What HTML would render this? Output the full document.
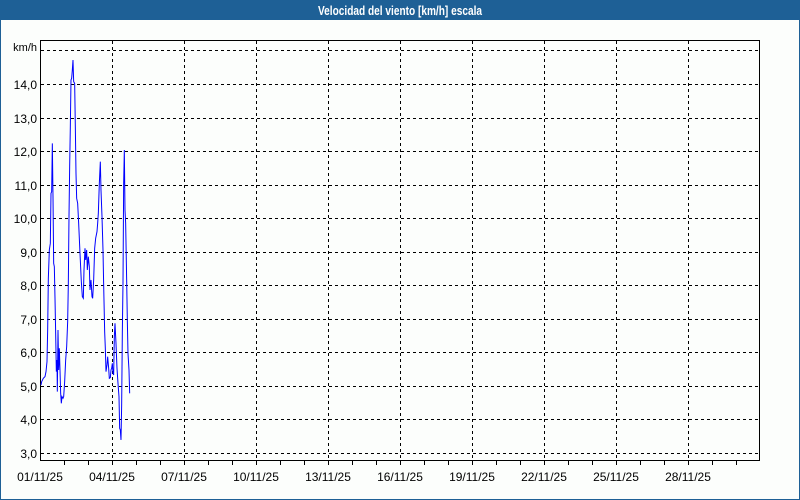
<!DOCTYPE html>
<html><head><meta charset="utf-8"><style>
html,body{margin:0;padding:0;background:#fcfefc;}
body{width:800px;height:500px;overflow:hidden;position:relative;font-family:"Liberation Sans",sans-serif;}
</style></head><body>
<svg width="800" height="500" xmlns="http://www.w3.org/2000/svg" style="position:absolute;left:0;top:0">
<rect x="0" y="0" width="800" height="500" fill="#fcfefc"/>
<rect x="0.5" y="0.5" width="799" height="499" fill="none" stroke="#1e6096"/>
<rect x="0" y="0" width="800" height="20" fill="#1e6096"/>
<text x="400" y="15" text-anchor="middle" fill="#fff" font-weight="bold" font-size="12.5" font-family="Liberation Sans, sans-serif" textLength="164" lengthAdjust="spacingAndGlyphs">Velocidad del viento [km/h] escala</text>
<g stroke="#000" stroke-width="1" stroke-dasharray="3,3" shape-rendering="crispEdges">
<line x1="41" y1="50.5" x2="760" y2="50.5"/>
<line x1="41" y1="84.5" x2="760" y2="84.5"/>
<line x1="41" y1="118.5" x2="760" y2="118.5"/>
<line x1="41" y1="151.5" x2="760" y2="151.5"/>
<line x1="41" y1="185.5" x2="760" y2="185.5"/>
<line x1="41" y1="218.5" x2="760" y2="218.5"/>
<line x1="41" y1="252.5" x2="760" y2="252.5"/>
<line x1="41" y1="285.5" x2="760" y2="285.5"/>
<line x1="41" y1="319.5" x2="760" y2="319.5"/>
<line x1="41" y1="352.5" x2="760" y2="352.5"/>
<line x1="41" y1="386.5" x2="760" y2="386.5"/>
<line x1="41" y1="419.5" x2="760" y2="419.5"/>
<line x1="41" y1="453.5" x2="760" y2="453.5"/>
<line x1="112.5" y1="41" x2="112.5" y2="460"/>
<line x1="184.5" y1="41" x2="184.5" y2="460"/>
<line x1="256.5" y1="41" x2="256.5" y2="460"/>
<line x1="328.5" y1="41" x2="328.5" y2="460"/>
<line x1="400.5" y1="41" x2="400.5" y2="460"/>
<line x1="472.5" y1="41" x2="472.5" y2="460"/>
<line x1="544.5" y1="41" x2="544.5" y2="460"/>
<line x1="616.5" y1="41" x2="616.5" y2="460"/>
<line x1="688.5" y1="41" x2="688.5" y2="460"/>
</g>
<rect x="40.5" y="40.5" width="719" height="420" fill="none" stroke="#000" shape-rendering="crispEdges"/>
<g stroke="#000" shape-rendering="crispEdges">
<line x1="64.5" y1="460" x2="64.5" y2="465"/><line x1="88.5" y1="460" x2="88.5" y2="465"/><line x1="112.5" y1="460" x2="112.5" y2="465"/>
<line x1="136.5" y1="460" x2="136.5" y2="465"/><line x1="160.5" y1="460" x2="160.5" y2="465"/><line x1="184.5" y1="460" x2="184.5" y2="465"/>
<line x1="208.5" y1="460" x2="208.5" y2="465"/><line x1="232.5" y1="460" x2="232.5" y2="465"/><line x1="256.5" y1="460" x2="256.5" y2="465"/>
<line x1="280.5" y1="460" x2="280.5" y2="465"/><line x1="304.5" y1="460" x2="304.5" y2="465"/><line x1="328.5" y1="460" x2="328.5" y2="465"/>
<line x1="352.5" y1="460" x2="352.5" y2="465"/><line x1="376.5" y1="460" x2="376.5" y2="465"/><line x1="400.5" y1="460" x2="400.5" y2="465"/>
<line x1="424.5" y1="460" x2="424.5" y2="465"/><line x1="448.5" y1="460" x2="448.5" y2="465"/><line x1="472.5" y1="460" x2="472.5" y2="465"/>
<line x1="496.5" y1="460" x2="496.5" y2="465"/><line x1="520.5" y1="460" x2="520.5" y2="465"/><line x1="544.5" y1="460" x2="544.5" y2="465"/>
<line x1="568.5" y1="460" x2="568.5" y2="465"/><line x1="592.5" y1="460" x2="592.5" y2="465"/><line x1="616.5" y1="460" x2="616.5" y2="465"/>
<line x1="640.5" y1="460" x2="640.5" y2="465"/><line x1="664.5" y1="460" x2="664.5" y2="465"/><line x1="688.5" y1="460" x2="688.5" y2="465"/>
<line x1="712.5" y1="460" x2="712.5" y2="465"/><line x1="736.5" y1="460" x2="736.5" y2="465"/>
</g>
<g font-size="12" fill="#000" text-anchor="end" font-family="Liberation Sans, sans-serif">
<text x="37" y="51" font-size="11">km/h</text>
<text x="37" y="89">14,0</text><text x="37" y="123">13,0</text><text x="37" y="156">12,0</text>
<text x="37" y="190">11,0</text><text x="37" y="223">10,0</text><text x="37" y="257">9,0</text>
<text x="37" y="290">8,0</text><text x="37" y="324">7,0</text><text x="37" y="357">6,0</text>
<text x="37" y="391">5,0</text><text x="37" y="424">4,0</text><text x="37" y="458">3,0</text>
</g>
<g font-size="12" fill="#000" text-anchor="middle" font-family="Liberation Sans, sans-serif">
<text x="40" y="481">01/11/25</text><text x="112" y="481">04/11/25</text><text x="184" y="481">07/11/25</text>
<text x="256" y="481">10/11/25</text><text x="328" y="481">13/11/25</text><text x="400" y="481">16/11/25</text>
<text x="472" y="481">19/11/25</text><text x="544" y="481">22/11/25</text><text x="616" y="481">25/11/25</text>
<text x="688" y="481">28/11/25</text>
</g>
<g transform="translate(35,50) scale(0.3333)">
<polyline fill="none" stroke="#0000ff" stroke-width="1" vector-effect="non-scaling-stroke" points="18,1005 20,995 25,985 30,980 33,965 36,935 38,840 40,685 43,600 46,580 48,430 50,425 52,280 54,440 56,640 58,650 60,745 62,850 64,965 66,930 67,1025 69,840 71,960 73,895 75,960 77,1030 79,1060 81,1040 84,1045 86,1040 89,995 92,930 95,890 98,815 100,700 102,500 104,350 106,230 108,90 110,85 112,60 114,30 116,95 119,100 121,230 123,370 125,445 128,460 131,520 135,610 139,695 142,740 145,745 147,660 150,595 152,630 155,600 157,660 160,620 163,650 165,720 168,690 171,740 173,745 176,690 179,595 182,565 186,545 188,520 190,490 193,400 196,335 198,420 201,500 204,600 206,705 209,845 211,895 213,965 216,945 218,920 221,955 223,985 226,983 228,960 230,955 232,940 234,970 236,975 238,860 240,820 243,880 246,955 249,1000 252,1040 254,1135 256,1140 258,1170 260,1065 262,850 264,700 266,400 268,300 270,480 272,520 275,690 277,810 279,910 282,960 284,1030"/>
</g>
</svg>
</body></html>
